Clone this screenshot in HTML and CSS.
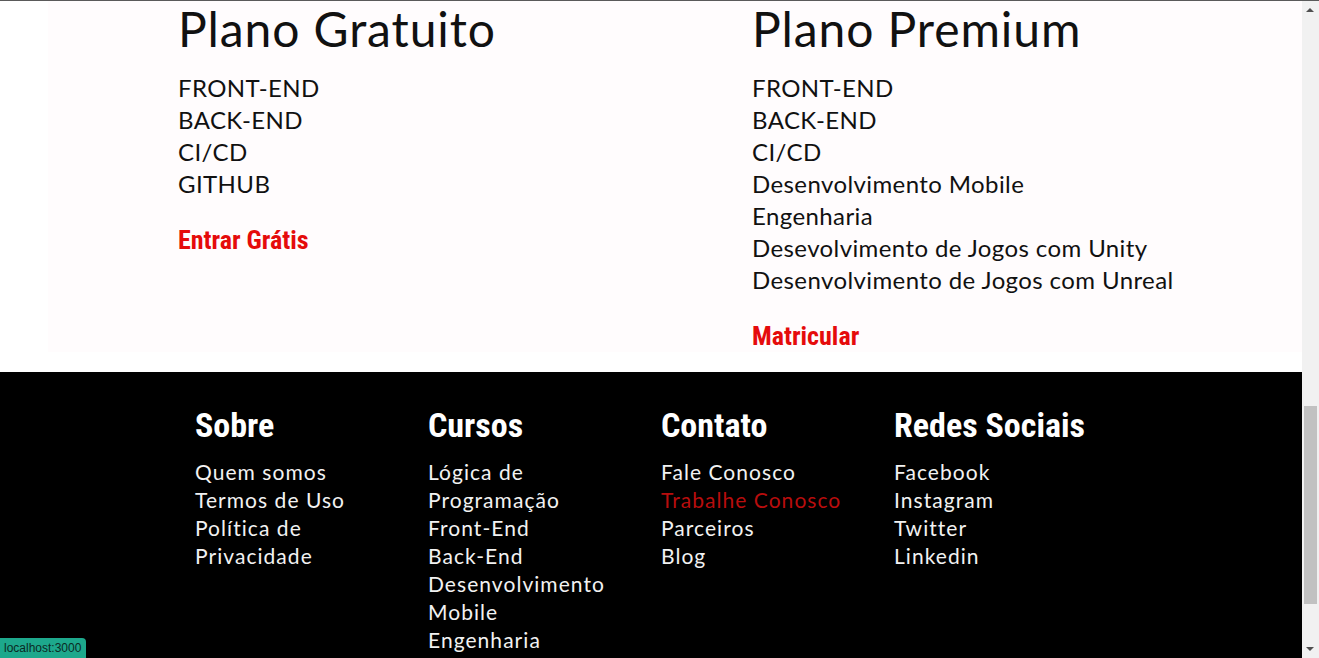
FILE: index.html
```html
<!DOCTYPE html>
<html lang="pt-BR">
<head>
<meta charset="utf-8">
<title>Planos</title>
<link rel="stylesheet" href="styles.css">
</head>
<body>
<div class="page">
  <section class="plans">
    <div class="plan plan-free">
      <h2 class="plan-title">Plano Gratuito</h2>
      <ul class="plan-list">
        <li>FRONT-END</li>
        <li>BACK-END</li>
        <li>CI/CD</li>
        <li>GITHUB</li>
      </ul>
      <a class="plan-link" href="#">Entrar Grátis</a>
    </div>
    <div class="plan plan-premium">
      <h2 class="plan-title">Plano Premium</h2>
      <ul class="plan-list">
        <li>FRONT-END</li>
        <li>BACK-END</li>
        <li>CI/CD</li>
        <li>Desenvolvimento Mobile</li>
        <li>Engenharia</li>
        <li>Desevolvimento de Jogos com Unity</li>
        <li>Desenvolvimento de Jogos com Unreal</li>
      </ul>
      <a class="plan-link" href="#">Matricular</a>
    </div>
  </section>
  <div class="spacer"></div>
  <footer class="footer">
    <div class="footer-col">
      <h3 class="footer-title">Sobre</h3>
      <ul class="footer-list">
        <li><a href="#">Quem somos</a></li>
        <li><a href="#">Termos de Uso</a></li>
        <li><a href="#">Política de Privacidade</a></li>
      </ul>
    </div>
    <div class="footer-col">
      <h3 class="footer-title">Cursos</h3>
      <ul class="footer-list">
        <li><a href="#">Lógica de Programação</a></li>
        <li><a href="#">Front-End</a></li>
        <li><a href="#">Back-End</a></li>
        <li><a href="#">Desenvolvimento Mobile</a></li>
        <li><a href="#">Engenharia</a></li>
      </ul>
    </div>
    <div class="footer-col">
      <h3 class="footer-title">Contato</h3>
      <ul class="footer-list">
        <li><a href="#">Fale Conosco</a></li>
        <li><a href="#" class="active">Trabalhe Conosco</a></li>
        <li><a href="#">Parceiros</a></li>
        <li><a href="#">Blog</a></li>
      </ul>
    </div>
    <div class="footer-col">
      <h3 class="footer-title">Redes Sociais</h3>
      <ul class="footer-list">
        <li><a href="#">Facebook</a></li>
        <li><a href="#">Instagram</a></li>
        <li><a href="#">Twitter</a></li>
        <li><a href="#">Linkedin</a></li>
      </ul>
    </div>
  </footer>
</div>
<div class="topline"></div>
<div class="scrollbar">
  <span class="arrow arrow-up"></span>
  <span class="thumb"></span>
  <span class="arrow arrow-down"></span>
</div>
<div class="status">localhost:3000</div>
</body>
</html>
```

FILE: styles.css
```css
html, body {
  margin: 0;
  padding: 0;
  height: 658px;
  overflow: hidden;
  background: #ffffff;
}
body {
  font-family: "Lato", "Noto Sans", sans-serif;
  color: #111;
}
.page {
  width: calc(100% - 17px);
}
ul {
  list-style: none;
  margin: 0;
  padding: 0;
}
a {
  text-decoration: none;
}

/* Plans */
.plans {
  margin-left: 48px;
  background: #fffcfd;
  display: grid;
  grid-template-columns: 574px 1fr;
  padding-left: 130px;
  height: 352px;
  box-sizing: border-box;
}
.plan-title {
  margin: 0 0 14px;
  font-size: 48px;
  line-height: 58px;
  font-weight: 400;
  letter-spacing: 0.9px;
  color: #111;
}
.plan-list {
  font-size: 24px;
  line-height: 32px;
  letter-spacing: 0.4px;
}
.plan-link {
  display: block;
  margin-top: 24px;
  font-family: "Liberation Sans Narrow", "Roboto Condensed", "Roboto", sans-serif;
  font-weight: 700;
  font-size: 26px;
  line-height: 32px;
  color: #e50b0b;
}
.spacer {
  height: 20px;
}

/* Footer */
.footer {
  background: #000;
  height: 400px;
  box-sizing: border-box;
  padding: 33px 0 0 195px;
  display: grid;
  grid-template-columns: repeat(4, 200px);
  column-gap: 33px;
  align-items: start;
}
.footer-title {
  margin: 0 0 13px;
  font-family: "Liberation Sans Narrow", "Roboto Condensed", "Roboto", sans-serif;
  font-weight: 700;
  font-size: 34px;
  line-height: 40px;
  color: #fff;
}
.footer-list {
  font-size: 21px;
  line-height: 28px;
  letter-spacing: 1.05px;
}
.footer-list a {
  color: #f2f2f2;
}
.footer-list a.active {
  color: #b80d0d;
}

/* overlays: window chrome */
.topline {
  position: fixed;
  top: 0;
  left: 0;
  right: 0;
  height: 1px;
  background: #5a5a5a;
}
.scrollbar {
  position: fixed;
  top: 1px;
  right: 0;
  bottom: 0;
  width: 17px;
  background: #f1f1f1;
}
.thumb {
  position: absolute;
  left: 2px;
  width: 13px;
  top: 405px;
  height: 198px;
  background: #c1c1c1;
}
.arrow {
  position: absolute;
  left: 4px;
  width: 0;
  height: 0;
  border-left: 4px solid transparent;
  border-right: 4px solid transparent;
}
.arrow-up {
  top: 7px;
  border-bottom: 4px solid #505050;
}
.arrow-down {
  bottom: 7px;
  border-top: 4px solid #505050;
}
.status {
  position: fixed;
  left: 0;
  bottom: 0;
  height: 20px;
  padding: 0 5px 0 4px;
  background: #1da88c;
  color: #0b2a24;
  font-family: "Liberation Sans Narrow", "Liberation Sans", sans-serif;
  font-size: 12px;
  line-height: 20px;
  border-top-right-radius: 4px;
}
```
